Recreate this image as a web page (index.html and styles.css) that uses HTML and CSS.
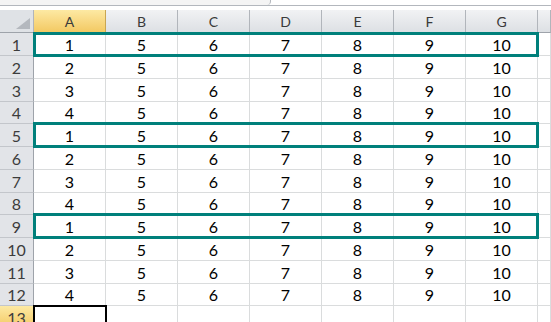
FILE: index.html
```html
<!DOCTYPE html>
<html lang="en">
<head>
    <meta charset="UTF-8">
    <meta name="viewport" content="width=device-width, initial-scale=1.0">
    <title>Sheet1</title>
    <link rel="stylesheet" href="styles.css">
</head>
<body>
    <div class="topbar"><div class="namebox"></div></div>

    <div class="sheet">
        <div class="row head">
            <div class="corner"></div>
            <div class="sel">A</div><div>B</div><div>C</div><div>D</div><div>E</div><div>F</div><div>G</div><div></div>
        </div>

        <div class="row"><div class="rh">1</div><div>1</div><div>5</div><div>6</div><div>7</div><div>8</div><div>9</div><div>10</div><div></div></div>
        <div class="row"><div class="rh">2</div><div>2</div><div>5</div><div>6</div><div>7</div><div>8</div><div>9</div><div>10</div><div></div></div>
        <div class="row"><div class="rh">3</div><div>3</div><div>5</div><div>6</div><div>7</div><div>8</div><div>9</div><div>10</div><div></div></div>
        <div class="row short"><div class="rh">4</div><div>4</div><div>5</div><div>6</div><div>7</div><div>8</div><div>9</div><div>10</div><div></div></div>

        <div class="row"><div class="rh">5</div><div>1</div><div>5</div><div>6</div><div>7</div><div>8</div><div>9</div><div>10</div><div></div></div>
        <div class="row"><div class="rh">6</div><div>2</div><div>5</div><div>6</div><div>7</div><div>8</div><div>9</div><div>10</div><div></div></div>
        <div class="row"><div class="rh">7</div><div>3</div><div>5</div><div>6</div><div>7</div><div>8</div><div>9</div><div>10</div><div></div></div>
        <div class="row short"><div class="rh">8</div><div>4</div><div>5</div><div>6</div><div>7</div><div>8</div><div>9</div><div>10</div><div></div></div>

        <div class="row"><div class="rh">9</div><div>1</div><div>5</div><div>6</div><div>7</div><div>8</div><div>9</div><div>10</div><div></div></div>
        <div class="row"><div class="rh">10</div><div>2</div><div>5</div><div>6</div><div>7</div><div>8</div><div>9</div><div>10</div><div></div></div>
        <div class="row"><div class="rh">11</div><div>3</div><div>5</div><div>6</div><div>7</div><div>8</div><div>9</div><div>10</div><div></div></div>
        <div class="row short"><div class="rh">12</div><div>4</div><div>5</div><div>6</div><div>7</div><div>8</div><div>9</div><div>10</div><div></div></div>

        <div class="row"><div class="rh sel">13</div><div></div><div></div><div></div><div></div><div></div><div></div><div></div><div></div></div>

        <!-- marked rows -->
        <div class="mark mark-1"></div>
        <div class="mark mark-5"></div>
        <div class="mark mark-9"></div>

        <!-- active cell A13 -->
        <div class="active"></div>
    </div>
</body>
</html>
```

FILE: styles.css
```css
body {
    margin: 0;
    background: #fff;
    color: #000;
    font-family: Lato, "Liberation Sans", sans-serif;
    font-size: 16px;
    overflow: hidden;
}
.topbar {
    display: flex;
    height: 5px;
    border-bottom: 1px solid #b3b7bd;
    margin-bottom: 4px;
}
.namebox {
    width: 270px;
    background: #f4f4f4;
    border-right: 1px solid #b3b7bd;
    border-bottom-right-radius: 4px;
}
.sheet {
    position: relative;
}
.row {
    display: grid;
    grid-template-columns: 34px repeat(7, 72px) 1fr;
    height: 23px;
}
.row.short {
    height: 22px;
}
.row > div {
    box-sizing: border-box;
    display: flex;
    align-items: center;
    justify-content: center;
    border-right: 1px solid #dadcdd;
    border-bottom: 1px solid #dadcdd;
}
.head > div {
    background: linear-gradient(#f1f2f4, #dde0e4);
    border-right-color: #b1b5bb;
    border-bottom-color: #9ea3aa;
    color: #3a3a3a;
    font-size: 14px;
}
.row > .rh {
    background: #e2e4e8;
    border-right-color: #9ea3aa;
    border-bottom-color: #c3c6cb;
    color: #3c3c3c;
}
.row > .sel {
    background: linear-gradient(#fde9a3, #f3c963);
    border-right-color: #c9a652;
    border-bottom-color: #c9a652;
}
.head > .corner {
    position: relative;
    background: #dfe2e6;
}
.corner::after {
    content: "";
    position: absolute;
    right: 3px;
    bottom: 3px;
    width: 14px;
    height: 11px;
    background: #b4b8be;
    clip-path: polygon(100% 0, 100% 100%, 0 100%);
}
.mark {
    position: absolute;
    left: 33px;
    width: 506px;
    box-sizing: border-box;
    border: 3px solid #00807b;
}
.mark-1 { top: 22px; height: 25px; }
.mark-5 { top: 112px; height: 26px; }
.mark-9 { top: 203px; height: 26px; }
.active {
    position: absolute;
    left: 33px;
    top: 295px;
    width: 74px;
    height: 30px;
    box-sizing: border-box;
    border: 2px solid #000;
}
```
